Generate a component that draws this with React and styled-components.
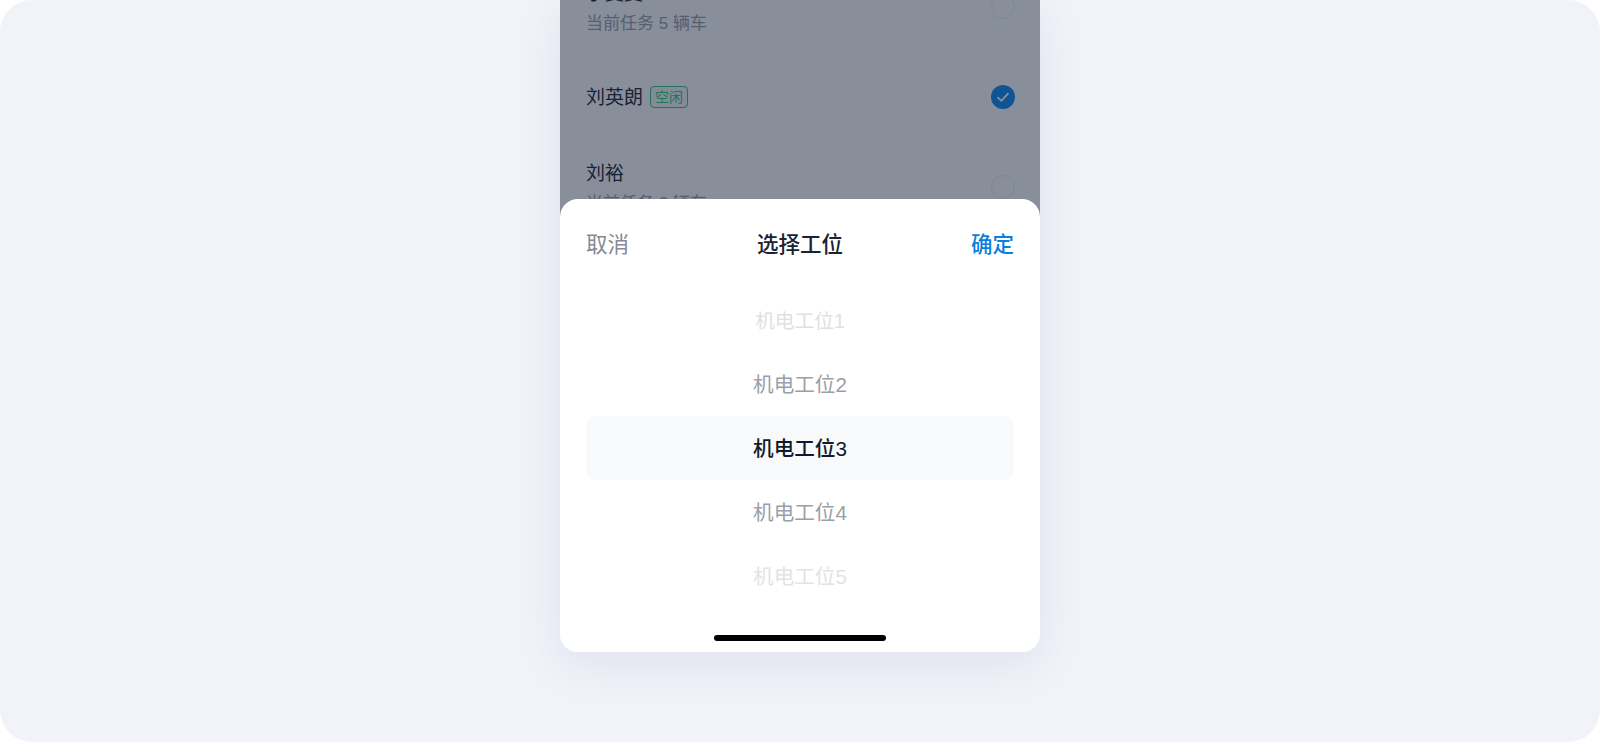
import styled, { createGlobalStyle } from "styled-components";

const GlobalStyle = createGlobalStyle`
  html, body {
    margin: 0;
    padding: 0;
    background: #ffffff;
  }
  body {
    font-family: "Liberation Sans", "Noto Sans CJK SC", sans-serif;
  }
`;

const Page = styled.div`
  height: 742px;
  background: #f1f3f8;
  border-radius: 32px;
  display: flex;
  justify-content: center;
  overflow: hidden;
`;

const Phone = styled.div`
  position: relative;
  width: 480px;
  height: 652px;
  background: #ffffff;
  border-radius: 0 0 18px 18px;
  box-shadow: 0 12px 44px rgba(90, 110, 175, 0.12);
`;

const Screen = styled.div`
  position: relative;
  height: 240px;
  overflow: hidden;
`;

const List = styled.div`
  margin-top: -38px;
  padding: 0 25px 0 26px;
`;

const Row = styled.div`
  height: 90px;
  display: flex;
  align-items: center;
  justify-content: space-between;
`;

const NameBlock = styled.div`
  display: flex;
  flex-direction: column;
  gap: 5px;
  padding-top: 3px;
`;

const NameLine = styled.div`
  display: flex;
  align-items: center;
  gap: 7px;
`;

const Name = styled.span`
  font-size: 19px;
  line-height: 26px;
  color: #1f2735;
  padding-top: ${(p) => (p.$nudge ? "2px" : "0")};
`;

const Task = styled.span`
  font-size: 17px;
  line-height: 24px;
  color: #9aa0ad;
  white-space: pre;
`;

const Tag = styled.span`
  width: 38px;
  height: 22px;
  box-sizing: border-box;
  border: 1px solid #3cc47c;
  border-radius: 4px;
  background: #f4fbf7;
  color: #3cc87e;
  font-size: 14px;
  line-height: 20px;
  text-align: center;
`;

const Radio = styled.span`
  width: 24px;
  height: 24px;
  box-sizing: border-box;
  border-radius: 50%;
  display: flex;
  align-items: center;
  justify-content: center;
  border: ${(p) => (p.$checked ? "none" : "1.5px solid #eceef2")};
  background: ${(p) => (p.$checked ? "#0d8cf5" : "transparent")};
`;

const Scrim = styled.div`
  position: absolute;
  inset: 0;
  background: rgba(17, 29, 53, 0.5);
`;

const Sheet = styled.div`
  position: absolute;
  left: 0;
  right: 0;
  bottom: 0;
  height: 453px;
  box-sizing: border-box;
  background: #ffffff;
  border-radius: 18px;
  padding: 0 26px;
  display: flex;
  flex-direction: column;
`;

const SheetHeader = styled.div`
  height: 86px;
  flex: none;
  display: flex;
  align-items: center;
  justify-content: space-between;
`;

const HeaderAction = styled.span`
  font-size: 21.5px;
  color: ${(p) => p.$color};
  font-weight: ${(p) => p.$weight || 400};
`;

const Title = styled.span`
  font-size: 21.5px;
  font-weight: 500;
  color: #1a2333;
`;

const Picker = styled.div`
  margin-top: 3px;
  display: flex;
  flex-direction: column;
`;

const PickerItem = styled.div`
  height: 64px;
  box-sizing: border-box;
  padding-bottom: 2px;
  display: flex;
  align-items: center;
  justify-content: center;
  border-radius: 10px;
  font-size: ${(p) => p.$size}px;
  color: ${(p) => p.$color};
  font-weight: ${(p) => (p.$active ? 500 : 400)};
  background: ${(p) => (p.$active ? "#f8f9fb" : "transparent")};
`;

const HomeBar = styled.div`
  position: absolute;
  left: 154px;
  bottom: 11px;
  width: 172px;
  height: 6px;
  border-radius: 3px;
  background: #000000;
`;

const stations = [
  { label: "机电工位1", size: 19.7, color: "#dfe0e3" },
  { label: "机电工位2", size: 20.6, color: "#9a9ea6" },
  { label: "机电工位3", size: 20.6, color: "#111a2c", active: true },
  { label: "机电工位4", size: 20.6, color: "#9a9ea6" },
  { label: "机电工位5", size: 20.6, color: "#e2e3e6" },
];

const CheckMark = () => (
  <svg width="14" height="14" viewBox="0 0 14 14" fill="none">
    <path d="M2 7.6 L5.4 10.8 L12 3.6" stroke="#ffffff" strokeWidth="1.8" strokeLinecap="round" strokeLinejoin="round" />
  </svg>
);

export default function App() {
  return (
    <>
      <GlobalStyle />
      <Page>
        <Phone>
          <Screen>
            <List>
              <Row>
                <NameBlock>
                  <Name>于雯雯</Name>
                  <Task>当前任务 5 辆车</Task>
                </NameBlock>
                <Radio />
              </Row>
              <Row>
                <NameLine>
                  <Name $nudge>刘英朗</Name>
                  <Tag>空闲</Tag>
                </NameLine>
                <Radio $checked>
                  <CheckMark />
                </Radio>
              </Row>
              <Row>
                <NameBlock>
                  <Name>刘裕</Name>
                  <Task>当前任务 2 辆车</Task>
                </NameBlock>
                <Radio />
              </Row>
            </List>
            <Scrim />
          </Screen>
          <Sheet>
            <SheetHeader>
              <HeaderAction $color="#858a94">取消</HeaderAction>
              <Title>选择工位</Title>
              <HeaderAction $color="#0a80dc" $weight={500}>确定</HeaderAction>
            </SheetHeader>
            <Picker>
              {stations.map((s) => (
                <PickerItem key={s.label} $size={s.size} $color={s.color} $active={s.active}>
                  {s.label}
                </PickerItem>
              ))}
            </Picker>
            <HomeBar />
          </Sheet>
        </Phone>
      </Page>
    </>
  );
}
